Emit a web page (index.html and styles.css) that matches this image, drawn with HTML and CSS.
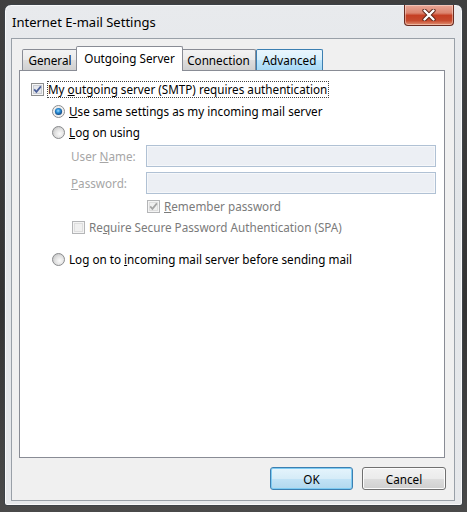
FILE: index.html
```html
<!DOCTYPE html>
<html>
<head>
<meta charset="utf-8">
<title>Internet E-mail Settings</title>
<link rel="stylesheet" href="styles.css">
</head>
<body>
<div class="window">
  <div class="titlebar">
    <span class="title">Internet E-mail Settings</span>
    <div class="close">
      <svg width="14" height="12" viewBox="0 0 14 12">
        <path d="M2.5 1.5 L11.5 10.5 M11.5 1.5 L2.5 10.5" stroke="#5b2418" stroke-width="4.2" stroke-linecap="round" fill="none"/>
        <path d="M2.5 1.5 L11.5 10.5 M11.5 1.5 L2.5 10.5" stroke="#ffffff" stroke-width="2.4" stroke-linecap="round" fill="none"/>
      </svg>
    </div>
  </div>
  <div class="client">
    <div class="tabs">
      <div class="tab t-general">General</div>
      <div class="tab t-sel">Outgoing Server</div>
      <div class="tab t-conn">Connection</div>
      <div class="tab t-adv">Advanced</div>
    </div>
    <div class="panel">
      <div class="row r1">
        <span class="cb">
          <svg width="13" height="13" viewBox="0 0 13 13">
            <rect x="0.5" y="0.5" width="12" height="12" fill="#f6f6f6" stroke="#8e8f8f"/>
            <rect x="2.5" y="2.5" width="8" height="8" fill="#e6e8ec" stroke="#c9ccd2"/>
            <path d="M3.2 6.4 L5.4 8.9 L9.9 3.4" fill="none" stroke="#4a5f9a" stroke-width="1.7"/>
          </svg>
        </span>
        <span class="focus">My <u>o</u>utgoing server (SMTP) requires authentication</span>
      </div>
      <div class="row r2">
        <span class="rb">
          <svg width="13" height="13" viewBox="0 0 13 13">
            <defs>
              <radialGradient id="rdot" cx="0.45" cy="0.4" r="0.6">
                <stop offset="0" stop-color="#9fdcff"/>
                <stop offset="0.45" stop-color="#2b8fd8"/>
                <stop offset="1" stop-color="#12457e"/>
              </radialGradient>
              <radialGradient id="rbg1" cx="0.5" cy="0.5" r="0.5">
                <stop offset="0" stop-color="#d4d4d4"/>
                <stop offset="1" stop-color="#f7f7f7"/>
              </radialGradient>
            </defs>
            <circle cx="6.5" cy="6.5" r="6" fill="url(#rbg1)" stroke="#8a8c8e"/>
            <circle cx="6.5" cy="6.5" r="3.6" fill="url(#rdot)"/>
          </svg>
        </span>
        <span class="lbl"><u>U</u>se same settings as my incoming mail server</span>
      </div>
      <div class="row r3">
        <span class="rb">
          <svg width="13" height="13" viewBox="0 0 13 13">
            <defs>
              <radialGradient id="rbg2" cx="0.6" cy="0.6" r="0.6">
                <stop offset="0" stop-color="#fbfbfb"/>
                <stop offset="0.6" stop-color="#e2e2e2"/>
                <stop offset="1" stop-color="#cbcbcb"/>
              </radialGradient>
            </defs>
            <circle cx="6.5" cy="6.5" r="6" fill="url(#rbg2)" stroke="#8a8c8e"/>
          </svg>
        </span>
        <span class="lbl"><u>L</u>og on using</span>
      </div>
      <div class="row r4">
        <span class="flabel">User <u>N</u>ame:</span>
        <span class="field"></span>
      </div>
      <div class="row r5">
        <span class="flabel"><u>P</u>assword:</span>
        <span class="field"></span>
      </div>
      <div class="row r6">
        <span class="cb">
          <svg width="13" height="13" viewBox="0 0 13 13">
            <rect x="0.5" y="0.5" width="12" height="12" fill="#f4f4f4" stroke="#b4b5b7"/>
            <rect x="2.5" y="2.5" width="8" height="8" fill="#f0f0f0" stroke="#dedede"/>
            <path d="M3.2 6.4 L5.4 8.9 L9.9 3.4" fill="none" stroke="#a4a4a4" stroke-width="1.7"/>
          </svg>
        </span>
        <span class="lbl dis"><u>R</u>emember password</span>
      </div>
      <div class="row r7">
        <span class="cb">
          <svg width="13" height="13" viewBox="0 0 13 13">
            <rect x="0.5" y="0.5" width="12" height="12" fill="#f4f4f4" stroke="#b4b5b7"/>
            <rect x="2.5" y="2.5" width="8" height="8" fill="#f0f0f0" stroke="#dedede"/>
          </svg>
        </span>
        <span class="lbl dis">Re<u>q</u>uire Secure Password Authentication (SPA)</span>
      </div>
      <div class="row r8">
        <span class="rb">
          <svg width="13" height="13" viewBox="0 0 13 13">
            <defs>
              <radialGradient id="rbg3" cx="0.6" cy="0.6" r="0.6">
                <stop offset="0" stop-color="#fbfbfb"/>
                <stop offset="0.6" stop-color="#e2e2e2"/>
                <stop offset="1" stop-color="#cbcbcb"/>
              </radialGradient>
            </defs>
            <circle cx="6.5" cy="6.5" r="6" fill="url(#rbg3)" stroke="#8a8c8e"/>
          </svg>
        </span>
        <span class="lbl">Log on to <u>i</u>ncoming mail server before sending mail</span>
      </div>
    </div>
    <div class="buttons">
      <div class="btn btn-ok">OK</div>
      <div class="btn btn-cancel">Cancel</div>
    </div>
  </div>
</div>
</body>
</html>
```

FILE: styles.css
```css
html, body {
  margin: 0;
  padding: 0;
}

body {
  width: 467px;
  height: 512px;
  overflow: hidden;
  box-sizing: border-box;
  padding: 4px 0 0 4px;
  background: linear-gradient(#404040, #333333 60%, #4a4a4a);
  font-family: "Noto Sans", "Open Sans", sans-serif;
  font-size: 11.7px;
  color: #000;
}

.window {
  width: 459px;
  height: 502px;
  box-sizing: border-box;
  border: 1px solid #3d4247;
  border-radius: 7px 7px 3px 3px;
  background: linear-gradient(#e8eaed, #e2e5e8 40%, #e6e8eb);
  box-shadow: inset 0 0 0 1px rgba(255, 255, 255, 0.7);
  padding: 0 7px 4px 6px;
  display: flex;
  flex-direction: column;
}

.titlebar {
  height: 33px;
  flex: none;
  display: flex;
  justify-content: space-between;
  align-items: flex-start;
  padding-left: 1px;
}

.title {
  font-size: 13px;
  line-height: 18px;
  padding-top: 8px;
  color: #000;
}

.close {
  width: 50px;
  height: 21px;
  box-sizing: border-box;
  margin-right: 1px;
  border: 1px solid #6a2b20;
  border-top: none;
  border-radius: 0 0 4px 4px;
  background: linear-gradient(#e9a797 0%, #dc8570 40%, #c53f24 52%, #c64a2e 78%, #e19274 100%);
  box-shadow: inset 0 0 0 1px rgba(255, 235, 225, 0.45);
  display: flex;
  align-items: center;
  justify-content: center;
}

.client {
  height: 463px;
  flex: none;
  box-sizing: border-box;
  border: 1px solid #99a0a8;
  background: #f0f0f0;
  display: flex;
  flex-direction: column;
}

.tabs {
  height: 31px;
  flex: none;
  display: flex;
  align-items: flex-end;
  padding-left: 10px;
}

.tab {
  height: 21px;
  box-sizing: border-box;
  border: 1px solid #898c95;
  border-bottom: none;
  border-radius: 2px 2px 0 0;
  background: linear-gradient(#f3f3f3 0%, #ebebeb 50%, #dedede 51%, #d0d0d0 100%);
  display: flex;
  align-items: center;
  justify-content: center;
  padding-bottom: 1px;
  white-space: nowrap;
}

.t-general { width: 56px; }
.t-conn { width: 75px; }

.t-sel {
  width: 107px;
  height: 25px;
  margin: 0 -2px -1px;
  background: #ffffff;
  position: relative;
  z-index: 1;
  padding-bottom: 3px;
}

.t-adv {
  width: 67px;
  border-color: #3c7fb1;
  background: linear-gradient(#eaf6fd 0%, #d9f0fc 50%, #bee6fd 51%, #a7d9f5 100%);
}

.panel {
  margin-left: 7px;
  width: 426px;
  height: 388px;
  flex: none;
  box-sizing: border-box;
  border: 1px solid #898c95;
  background: #ffffff;
  padding: 9px 0 0 11px;
  display: flex;
  flex-direction: column;
}

.row {
  display: flex;
  align-items: center;
  flex: none;
  white-space: nowrap;
}

.cb, .rb {
  width: 13px;
  height: 13px;
  flex: none;
  display: block;
}

.cb svg, .rb svg {
  display: block;
}

.lbl {
  margin-left: 4px;
  line-height: 15px;
}

.dis {
  color: #7b7b7b;
}

.focus {
  margin-left: 3px;
  border: 1px dotted #444;
  padding: 0 1px 0 0;
  line-height: 15px;
}

.r1 { height: 18px; }
.r2 { height: 20px; margin-top: 3px; padding-left: 21px; }
.r3 { height: 20px; margin-top: 1px; padding-left: 21px; }
.r4 { height: 22px; margin-top: 3px; padding-left: 40px; }
.r5 { height: 22px; margin-top: 5px; padding-left: 40px; }
.r6 { height: 18px; margin-top: 3px; padding-left: 116px; }
.r7 { height: 18px; margin-top: 3px; padding-left: 41px; }
.r8 { height: 18px; margin-top: 14px; padding-left: 21px; }

.flabel {
  width: 75px;
  flex: none;
  color: #a6a6a6;
}

.field {
  width: 290px;
  height: 22px;
  box-sizing: border-box;
  border: 1px solid #b0c1d4;
  background: #eceff4;
  box-shadow: inset 0 0 0 1px #f5f7fa;
}

.buttons {
  display: flex;
  justify-content: flex-end;
  gap: 9px;
  margin-top: 9px;
  padding-right: 8px;
}

.btn {
  height: 23px;
  box-sizing: border-box;
  border: 1px solid #707070;
  border-radius: 3px;
  background: linear-gradient(#f2f2f2 0%, #ebebeb 50%, #dddddd 51%, #cfcfcf 100%);
  box-shadow: inset 0 0 0 1px #fcfcfc;
  display: flex;
  align-items: center;
  justify-content: center;
}

.btn-ok {
  width: 83px;
  border-color: #3c7fb1;
  background: linear-gradient(#e5f4fc 0%, #d6ecf8 50%, #c2e3f6 51%, #b1d8ee 100%);
  box-shadow: inset 0 0 0 1px #7ecbf2;
}

.btn-cancel {
  width: 84px;
}
```
